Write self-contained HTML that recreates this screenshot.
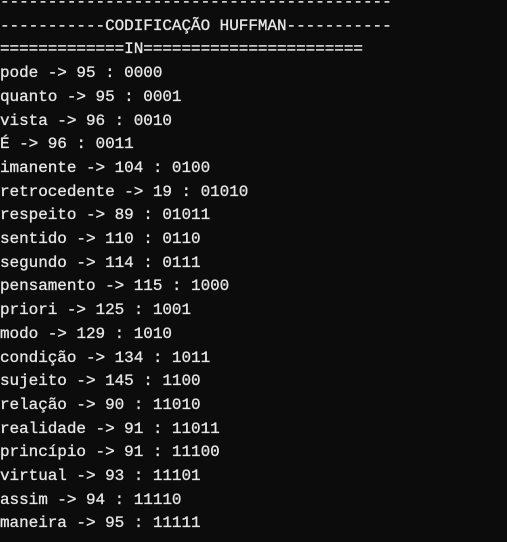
<!DOCTYPE html>
<html><head><meta charset="utf-8"><style>
html,body{margin:0;padding:0;background:#0c0c0c;width:507px;height:542px;overflow:hidden}
pre{margin:0;position:absolute;top:-9px;left:0;font-family:"Liberation Mono","DejaVu Sans Mono",monospace;font-size:16px;line-height:23.7px;color:#e6e6e6;letter-spacing:-0.05px;-webkit-text-stroke:0.3px #e6e6e6}
</style></head><body>
<pre>-----------------------------------------
-----------CODIFICAÇÃO HUFFMAN-----------
=============IN=======================
pode -> 95 : 0000
quanto -> 95 : 0001
vista -> 96 : 0010
É -> 96 : 0011
imanente -> 104 : 0100
retrocedente -> 19 : 01010
respeito -> 89 : 01011
sentido -> 110 : 0110
segundo -> 114 : 0111
pensamento -> 115 : 1000
priori -> 125 : 1001
modo -> 129 : 1010
condição -> 134 : 1011
sujeito -> 145 : 1100
relação -> 90 : 11010
realidade -> 91 : 11011
princípio -> 91 : 11100
virtual -> 93 : 11101
assim -> 94 : 11110
maneira -> 95 : 11111
</pre>
</body></html>
